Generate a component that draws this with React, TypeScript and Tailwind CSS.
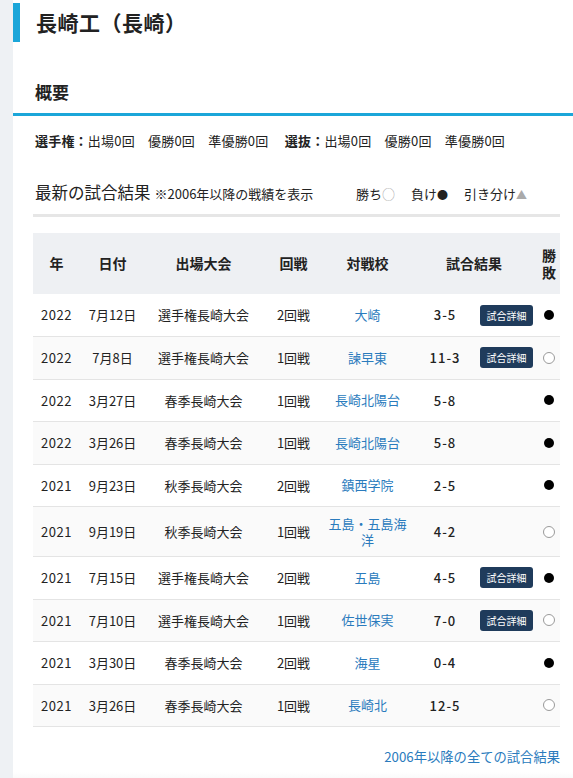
import React from "react";

type Row = {
  year: string;
  date: string;
  event: string;
  round: string;
  opp: string;
  score: string;
  detail: boolean;
  win: boolean;
};

const rows: Row[] = [
  { year: "2022", date: "7月12日", event: "選手権長崎大会", round: "2回戦", opp: "大崎", score: "3-5", detail: true, win: false },
  { year: "2022", date: "7月8日", event: "選手権長崎大会", round: "1回戦", opp: "諫早東", score: "11-3", detail: true, win: true },
  { year: "2022", date: "3月27日", event: "春季長崎大会", round: "1回戦", opp: "長崎北陽台", score: "5-8", detail: false, win: false },
  { year: "2022", date: "3月26日", event: "春季長崎大会", round: "1回戦", opp: "長崎北陽台", score: "5-8", detail: false, win: false },
  { year: "2021", date: "9月23日", event: "秋季長崎大会", round: "2回戦", opp: "鎮西学院", score: "2-5", detail: false, win: false },
  { year: "2021", date: "9月19日", event: "秋季長崎大会", round: "1回戦", opp: "五島・五島海洋", score: "4-2", detail: false, win: true },
  { year: "2021", date: "7月15日", event: "選手権長崎大会", round: "2回戦", opp: "五島", score: "4-5", detail: true, win: false },
  { year: "2021", date: "7月10日", event: "選手権長崎大会", round: "1回戦", opp: "佐世保実", score: "7-0", detail: true, win: true },
  { year: "2021", date: "3月30日", event: "春季長崎大会", round: "2回戦", opp: "海星", score: "0-4", detail: false, win: false },
  { year: "2021", date: "3月26日", event: "春季長崎大会", round: "1回戦", opp: "長崎北", score: "12-5", detail: false, win: true },
];

const font = { fontFamily: '"Noto Sans CJK JP", "Noto Sans", sans-serif' };

const Mark = ({ win }: { win: boolean }) =>
  win ? (
    <span className="inline-block w-[12px] h-[12px] rounded-full border border-[#9a9a9a] bg-white" />
  ) : (
    <span className="inline-block w-[10px] h-[10px] rounded-full bg-black" />
  );

const App = () => {
  return (
    <div className="flex min-h-[778px] bg-white text-[#222] overflow-hidden" style={font}>
      <div className="w-[13px] shrink-0 bg-[#eef1f4]" />
      <div className="flex-1 min-w-0 relative">
        <div className="flex items-start pt-[3px]">
          <div className="w-[7px] h-[39px] bg-[#1ba6d9]" />
          <h1 className="ml-[16px] text-[21px] font-bold leading-[39px] tracking-[0.5px]">
            長崎工（長崎）
          </h1>
        </div>

        <div className="mt-[37px] border-b-[3px] border-[#1ba6d9] pb-[8px]">
          <h2 className="pl-[22px] text-[17px] font-bold leading-[26px]">概要</h2>
        </div>

        <p className="pl-[22px] mt-[16px] text-[13px] leading-[18px] whitespace-nowrap tracking-[0.2px]">
          <b>選手権：</b>出場0回　優勝0回　準優勝0回　 <b>選抜：</b>出場0回　優勝0回　準優勝0回
        </p>

        <div className="ml-[20px] mr-[13px] mt-[30px] pb-[8px] border-b-[3px] border-[#e6e6e6] flex items-end">
          <h3 className="pl-[2px] text-[16.5px] leading-[24px] whitespace-nowrap">
            最新の試合結果
            <span className="ml-[4px] text-[13px]">※2006年以降の戦績を表示</span>
          </h3>
          <div className="ml-auto mr-[33px] flex gap-[16px] text-[13px] leading-[24px] whitespace-nowrap">
            <span>
              勝ち<span className="text-[#aaa]">○</span>
            </span>
            <span>
              負け<span className="text-[11px]">●</span>
            </span>
            <span>
              引き分け<span className="text-[#aaa] text-[11px]">▲</span>
            </span>
          </div>
        </div>

        <table className="ml-[20px] mt-[16px] w-[527px] table-fixed border-collapse text-[13px]">
          <colgroup>
            <col className="w-[47px]" />
            <col className="w-[65px]" />
            <col className="w-[117px]" />
            <col className="w-[63px]" />
            <col className="w-[85px]" />
            <col className="w-[128px]" />
            <col className="w-[22px]" />
          </colgroup>
          <thead>
            <tr className="bg-[#eef0f3] h-[61px] text-[14px] font-bold">
              <th className="font-bold">年</th>
              <th className="font-bold">日付</th>
              <th className="font-bold">出場大会</th>
              <th className="font-bold">回戦</th>
              <th className="font-bold">対戦校</th>
              <th className="font-bold">試合結果</th>
              <th className="font-bold leading-[17px] px-0">勝敗</th>
            </tr>
          </thead>
          <tbody>
            {rows.map((r, i) => (
              <tr
                key={i}
                className={`border-b border-[#e4e4e4] ${i % 2 === 1 ? "bg-[#fafafa]" : "bg-white"} ${
                  r.opp.length > 6 ? "h-[50px]" : "h-[42.5px]"
                }`}
              >
                <td className="text-center tracking-[0.5px]">{r.year}</td>
                <td className="text-center">{r.date}</td>
                <td className="text-center">{r.event}</td>
                <td className="text-center">{r.round}</td>
                <td className="text-center px-[3px] leading-[16px] text-[#2a7bbd]">{r.opp}</td>
                <td>
                  <div className="flex items-center">
                    <span className="w-[70px] text-center tracking-[1px] font-medium">{r.score}</span>
                    {r.detail && (
                      <span className="w-[53px] h-[21px] rounded-[3px] bg-[#1f3b5b] text-white text-[10px] leading-[21px] text-center">
                        試合詳細
                      </span>
                    )}
                  </div>
                </td>
                <td className="text-center">
                  <div className="flex justify-center">
                    <Mark win={r.win} />
                  </div>
                </td>
              </tr>
            ))}
          </tbody>
        </table>

        <div className="ml-[13px] mr-[13px] mt-[20px] text-right text-[13.3px] text-[#2a7bbd]">
          2006年以降の全ての試合結果
        </div>
        <div className="h-[20px] bg-gradient-to-b from-white to-[#eeeeee] mt-[5px]" />
      </div>
    </div>
  );
};

export default App;
